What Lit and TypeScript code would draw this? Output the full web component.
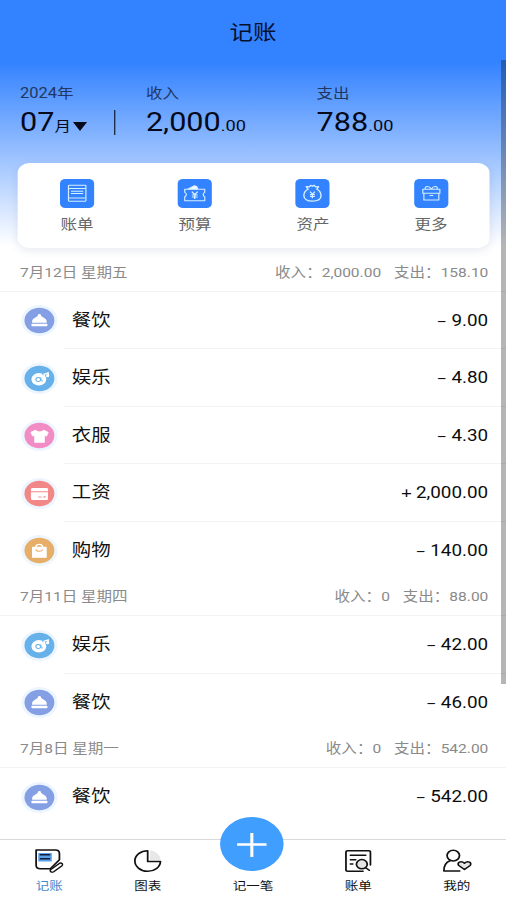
import { LitElement, html, css, svg, TemplateResult } from "lit";
import { customElement, property } from "lit/decorators.js";

type Kind = "food" | "fun" | "clothes" | "salary" | "shop";

interface Entry {
  kind: Kind;
  name: string;
  sign: "–" | "+";
  amount: string;
}

interface Day {
  date: string;
  income: string;
  spend: string;
  entries: Entry[];
}

const DAYS: Day[] = [
  {
    date: "7月12日 星期五",
    income: "2,000.00",
    spend: "158.10",
    entries: [
      { kind: "food", name: "餐饮", sign: "–", amount: "9.00" },
      { kind: "fun", name: "娱乐", sign: "–", amount: "4.80" },
      { kind: "clothes", name: "衣服", sign: "–", amount: "4.30" },
      { kind: "salary", name: "工资", sign: "+", amount: "2,000.00" },
      { kind: "shop", name: "购物", sign: "–", amount: "140.00" },
    ],
  },
  {
    date: "7月11日 星期四",
    income: "0",
    spend: "88.00",
    entries: [
      { kind: "fun", name: "娱乐", sign: "–", amount: "42.00" },
      { kind: "food", name: "餐饮", sign: "–", amount: "46.00" },
    ],
  },
  {
    date: "7月8日 星期一",
    income: "0",
    spend: "542.00",
    entries: [{ kind: "food", name: "餐饮", sign: "–", amount: "542.00" }],
  },
];

const KIND_COLOR: Record<Kind, string> = {
  food: "#859fe4",
  fun: "#66b1ea",
  clothes: "#f28cc4",
  salary: "#f18787",
  shop: "#e6ae67",
};

const KIND_GLYPH: Record<Kind, TemplateResult> = {
  food: svg`<g fill="#fff"><circle cx="15.500" cy="10.200" r="1.300"/><path d="M9.300 17.800v-1.500c0-2.600 3.400-4 5-5.600h2.400c1.600 1.600 5 3 5 5.600v1.500z"/><rect x="8.700" y="18.800" width="13.600" height="2.400" rx="0.600"/></g>`,
  fun: svg`<g><ellipse cx="15" cy="16.300" rx="6.300" ry="6.200" fill="#fff"/><path d="M18.800 13l3.500-3" fill="none" stroke="#66b1ea" stroke-width="3"/><path d="M19.500 14V11.200l3.400-1.300v3" fill="none" stroke="#fff" stroke-width="1.300"/><circle cx="19" cy="13.800" r="1.500" fill="#fff"/><circle cx="22.400" cy="12.700" r="1.500" fill="#fff"/><circle cx="14.500" cy="16.500" r="2" fill="none" stroke="#66b1ea" stroke-width=".9"/><path d="M16.800 14.500v2.500c0 1.200 1.200 1.300 1.800.500" fill="none" stroke="#66b1ea" stroke-width=".8"/></g>`,
  clothes: svg`<path fill="#fff" stroke="#fff" stroke-width=".6" stroke-linejoin="round" d="M12.200 10l-4 2.300 1.400 3.800 1.800-.5v6.800h8.400v-6.800l1.800.5 1.400-3.800L19 10c-1 2.300-5.800 2.300-6.800 0z"/>`,
  salary: svg`<g><rect x="8.300" y="10" width="14.500" height="12" rx="1.300" fill="#fff"/><path d="M8 13.800h15" stroke="#f18787" stroke-width="1"/><path d="M14.300 19h3.200M18.500 19.500l1.800-1.300v1.500" fill="none" stroke="#f18787" stroke-width=".8"/></g>`,
  shop: svg`<g><path d="M12.300 12.500c0-4.200 6-4.200 6 0" fill="none" stroke="#fff" stroke-width="1.300"/><path d="M9.700 12.300h11.500v10H9.700z" fill="#fff" stroke="#fff" stroke-width="1" stroke-linejoin="round"/><path d="M12.500 14.300c.6 2.700 5 2.700 5.700 0" fill="none" stroke="#e6ae67" stroke-width="1"/></g>`,
};

const SHORTCUTS: { label: string; glyph: TemplateResult }[] = [
  {
    label: "账单",
    glyph: svg`<rect x="7.200" y="6.200" width="14.800" height="16" rx=".6"/><path d="M7.500 9.600h14.200M9.300 12.300h10.400M9.300 14.600h10.400M7.500 18.900h14.200"/>`,
  },
  {
    label: "预算",
    glyph: svg`<path d="M6 10.200h17v3.200c-1.800.8-1.800 3.600 0 4.400v3.900H6v-3.900c1.800-.8 1.800-3.600 0-4.400z"/><path d="M9 10l5.200-3.200 2 .7.8 2.500z" fill="#fff"/><path stroke-width="1.200" d="M12 12.700l2.500 3 2.500-3M14.500 15.500v4.500M12 16h5M12 18h5"/>`,
  },
  {
    label: "资产",
    glyph: svg`<path stroke-width="1.200" d="M10.800 10.300L9.300 7.600l2.500.3 1.200-1.600 1.500 1 1.500-1 1.200 1.600 2.500-.3-1.500 2.700c2.700 1.600 3.600 4 3.600 6.300 0 3.700-2.900 5.600-7.300 5.600s-7.300-1.900-7.300-5.600c0-2.300.9-4.700 3.600-6.300z"/><path stroke-width="1.100" d="M12.400 12.700l2.100 2.500 2.100-2.500M14.500 15.100v4.200M12.400 15.600h4.200M12.400 17.500h4.200"/>`,
  },
  {
    label: "更多",
    glyph: svg`<path d="M7.300 10.200h14.500v4H7.300zM8.200 14.200v6.900h12.700v-6.900M14.500 10c-2-3.600-6-3-5 0M14.500 10c2-3.600 6-3 5 0M13 16.600h3.200"/>`,
  },
];

@customElement("kind-badge")
class KindBadge extends LitElement {
  @property() kind: Kind = "food";
  static styles = css`
    :host { display: block; width: 31px; height: 31px; }
    .badge { display: block; }
  `;
  render() {
    return html`<svg class="badge" width="31" height="31" viewBox="0 0 31 31">
      <circle cx="15.5" cy="15.5" r="15.5" fill="#edf5fe" />
      <circle cx="15.5" cy="15.5" r="12.700" fill=${KIND_COLOR[this.kind]} />
      ${KIND_GLYPH[this.kind]}
    </svg>`;
  }
}

@customElement("day-group")
class DayGroup extends LitElement {
  @property({ attribute: false }) day!: Day;
  static styles = css`
    :host { display: block; }
    .head {
      height: 37px; box-sizing: border-box; padding: 0.500px 15px 0 17px;
      display: flex; align-items: center; justify-content: space-between;
      border-bottom: 1px solid #f3f3f3;
      font-size: 13.200px; line-height: 18px; color: #8a8a8a; white-space: pre;
    }
    .sums { display: flex; gap: 11px; }
    .row { display: flex; height: 57.500px; padding-left: 18px; align-items: stretch; }
    .badge { align-self: center; margin-top: 1px; }
    .body {
      flex: 1; margin-left: 5px; padding: 1.500px 15.200px 0 7px;
      display: flex; align-items: center; justify-content: space-between;
      border-bottom: 1px solid #f3f3f3; color: #111;
    }
    .row:last-child .body { border-bottom-color: transparent; }
    .name { font-size: 16.500px; line-height: 24px; }
    .amount { display: flex; gap: 3.500px; font-size: 16px; line-height: 24px; color: #0c0c0c; }
    .sign { font-family: Lato, sans-serif; line-height: 21px; }
  `;
  render() {
    const d = this.day;
    return html`
      <div class="head">
        <span>${d.date}</span>
        <div class="sums"><span>收入：${d.income}</span><span>支出：${d.spend}</span></div>
      </div>
      <div>
        ${d.entries.map(
          (e) => html`<div class="row">
            <kind-badge class="badge" .kind=${e.kind}></kind-badge>
            <div class="body">
              <span class="name">${e.name}</span>
              <div class="amount"><span class="sign">${e.sign}</span><span>${e.amount}</span></div>
            </div>
          </div>`
        )}
      </div>
    `;
  }
}

@customElement("tab-bar")
class TabBar extends LitElement {
  static styles = css`
    :host { display: block; }
    .bar {
      height: 61px; box-sizing: border-box; border-top: 1px solid #d9d9d9; background: #fff;
      display: flex; font-size: 11.500px; line-height: 16px; color: #111;
    }
    .tab { flex: 1; display: flex; flex-direction: column; align-items: center; padding-top: 9px; gap: 4px; }
    .mid { flex: 0 0 95.400px; padding-top: 0; gap: 7px; margin-top: -23px; }
    .on { color: #4489ca; }
    .plus { width: 54px; height: 54px; border-radius: 50%; background: #409eff; margin-left: -3px; }
    svg { display: block; fill: none; stroke: #111; stroke-width: 1.500; stroke-linecap: round; stroke-linejoin: round; }
  `;
  render() {
    return html`<div class="bar">
      <div class="tab on">
        <svg width="25" height="25" viewBox="0 0 25 25">
          <rect x="3.500" y="4" width="11.500" height="8.500" fill="#5a9fe8" stroke="none" />
          <path d="M1.700.9h16.300q3.500 0 3.500 3.500v6.400l-7.700 8.900H5.200q-3.500 0-3.500-3.500z" />
          <path d="M4.800 5.700h8.800M4.800 9.700h8.800" stroke="#0f1f38" stroke-linecap="butt" />
          <path fill="#fff" stroke-width="1.300" d="M14.200 20.400l7.200-6q1.300-.9 2.300.1t0 2.200l-7.100 6q-1.400 1-2.400 0t0-2.300z" />
        </svg><span>记账</span>
      </div>
      <div class="tab">
        <svg width="25" height="25" viewBox="0 0 25 25">
          <path d="M14.500 1.200a10.500 10.500 0 0 1 9 9.800h-9z" fill="#e8e8e8" stroke="none" />
          <path d="M12.500 1.700v10.800h10.900a10.900 10.300 0 1 1-10.900-10.800z" />
        </svg><span>图表</span>
      </div>
      <div class="tab mid">
        <svg class="plus" viewBox="0 0 54 54"><path d="M14.500 27.500h25M27 16v24" stroke="#fff" stroke-width="2.600" stroke-linecap="butt" /></svg>
        <span>记一笔</span>
      </div>
      <div class="tab">
        <svg width="25" height="25" viewBox="0 0 25 25">
          <path d="M22.800 16V3.300q0-1.500-1.500-1.500H3.500Q2 1.800 2 3.300v17.500q0 1.500 1.500 1.500h13M5.800 6.200h13M5.800 10.700h4.500M5.800 15h2" />
          <circle cx="15.500" cy="15.200" r="4.600" fill="#e5e5e5" />
          <path d="M18.800 18.700l3 2.600" />
        </svg><span>账单</span>
      </div>
      <div class="tab">
        <svg width="25" height="25" viewBox="0 0 25 25">
          <circle cx="9.200" cy="6.600" r="5.300" />
          <path d="M6.500 11.700C3 13.200 1.200 15.900 1.200 21.900h13.500" />
          <path fill="#e5e5e5" d="M18.700 20.500l-4.800-4c-2.100-2.500 1.800-5.600 4.800-2.300 3-3.300 6.900-.2 4.800 2.300z" />
        </svg><span>我的</span>
      </div>
    </div>`;
  }
}

@customElement("app-root")
class AppRoot extends LitElement {
  static styles = css`
    :host {
      display: block; position: relative; width: 506px; height: 900px; overflow: hidden; background: #fff;
      font-family: Roboto, "Noto Sans CJK SC", "Noto Sans", sans-serif;
    }
    /* 430-unit layout widened to fill the window */
    .page {
      width: 430px; height: 900px; display: flex; flex-direction: column;
      transform: scaleX(1.17674); transform-origin: 0 0;
      background: linear-gradient(#3382ff 0 62px, #fff 246px);
    }
    .title { height: 60px; padding-top: 3px; box-sizing: border-box; display: flex; align-items: center; justify-content: center; font-size: 20px; color: #07102c; }
    .summary { height: 103px; display: flex; box-sizing: border-box; padding: 23px 17px 0; }
    .cell { display: flex; flex-direction: column; gap: 2px; }
    .month { width: 79.500px; }
    .income { width: 145px; margin-left: 26px; }
    .rule { width: 1.500px; height: 25px; background: #10192c; margin-top: 27px; }
    .cap { font-size: 14px; line-height: 20px; color: #213761; }
    .value { display: flex; align-items: baseline; line-height: 34px; color: #06091a; white-space: pre; }
    .big { font-size: 26px; }
    .small { font-size: 15.500px; }
    .unit { font-size: 14px; }
    .caret { width: 0; height: 0; border: 6.700px solid transparent; border-top: 9.500px solid #06091a; border-bottom: 0; margin-left: 2px; }
    .card {
      height: 85px; margin: 0 13.600px 0 15.300px; box-sizing: border-box; padding-top: 16px;
      display: grid; grid-template-columns: repeat(4, 1fr);
      background: #fff; border-radius: 10px; box-shadow: 0 3px 8px rgba(40, 60, 110, 0.1);
    }
    .shortcut { display: flex; flex-direction: column; align-items: center; gap: 6px; font-size: 14px; line-height: 20px; color: #666; }
    .tile { width: 29px; height: 29px; border-radius: 4.500px; background: #3382ff; fill: none; stroke: #d5f0ff; stroke-width: 1; stroke-linejoin: round; }
    .list { flex: 1; padding-top: 6.500px; overflow: hidden; }
    .thumb { position: absolute; right: 0; top: 60px; width: 5px; height: 624px; background: rgba(0, 0, 0, 0.290); }
  `;
  render() {
    return html`
      <div class="page">
        <div class="title">记账</div>
        <div class="summary">
          <div class="cell month">
            <span class="cap">2024年</span>
            <div class="value"><span class="big">07</span><span class="unit">月</span><i class="caret"></i></div>
          </div>
          <div class="rule"></div>
          <div class="cell income">
            <span class="cap">收入</span>
            <div class="value"><span class="big">2,000</span><span class="small">.00</span></div>
          </div>
          <div class="cell">
            <span class="cap">支出</span>
            <div class="value"><span class="big">788</span><span class="small">.00</span></div>
          </div>
        </div>
        <div class="card">
          ${SHORTCUTS.map(
            (s) => html`<div class="shortcut">
              <svg class="tile" viewBox="0 0 29 29">${s.glyph}</svg><span>${s.label}</span>
            </div>`
          )}
        </div>
        <div class="list">${DAYS.map((d) => html`<day-group .day=${d}></day-group>`)}</div>
        <tab-bar></tab-bar>
      </div>
      <div class="thumb"></div>
    `;
  }
}
